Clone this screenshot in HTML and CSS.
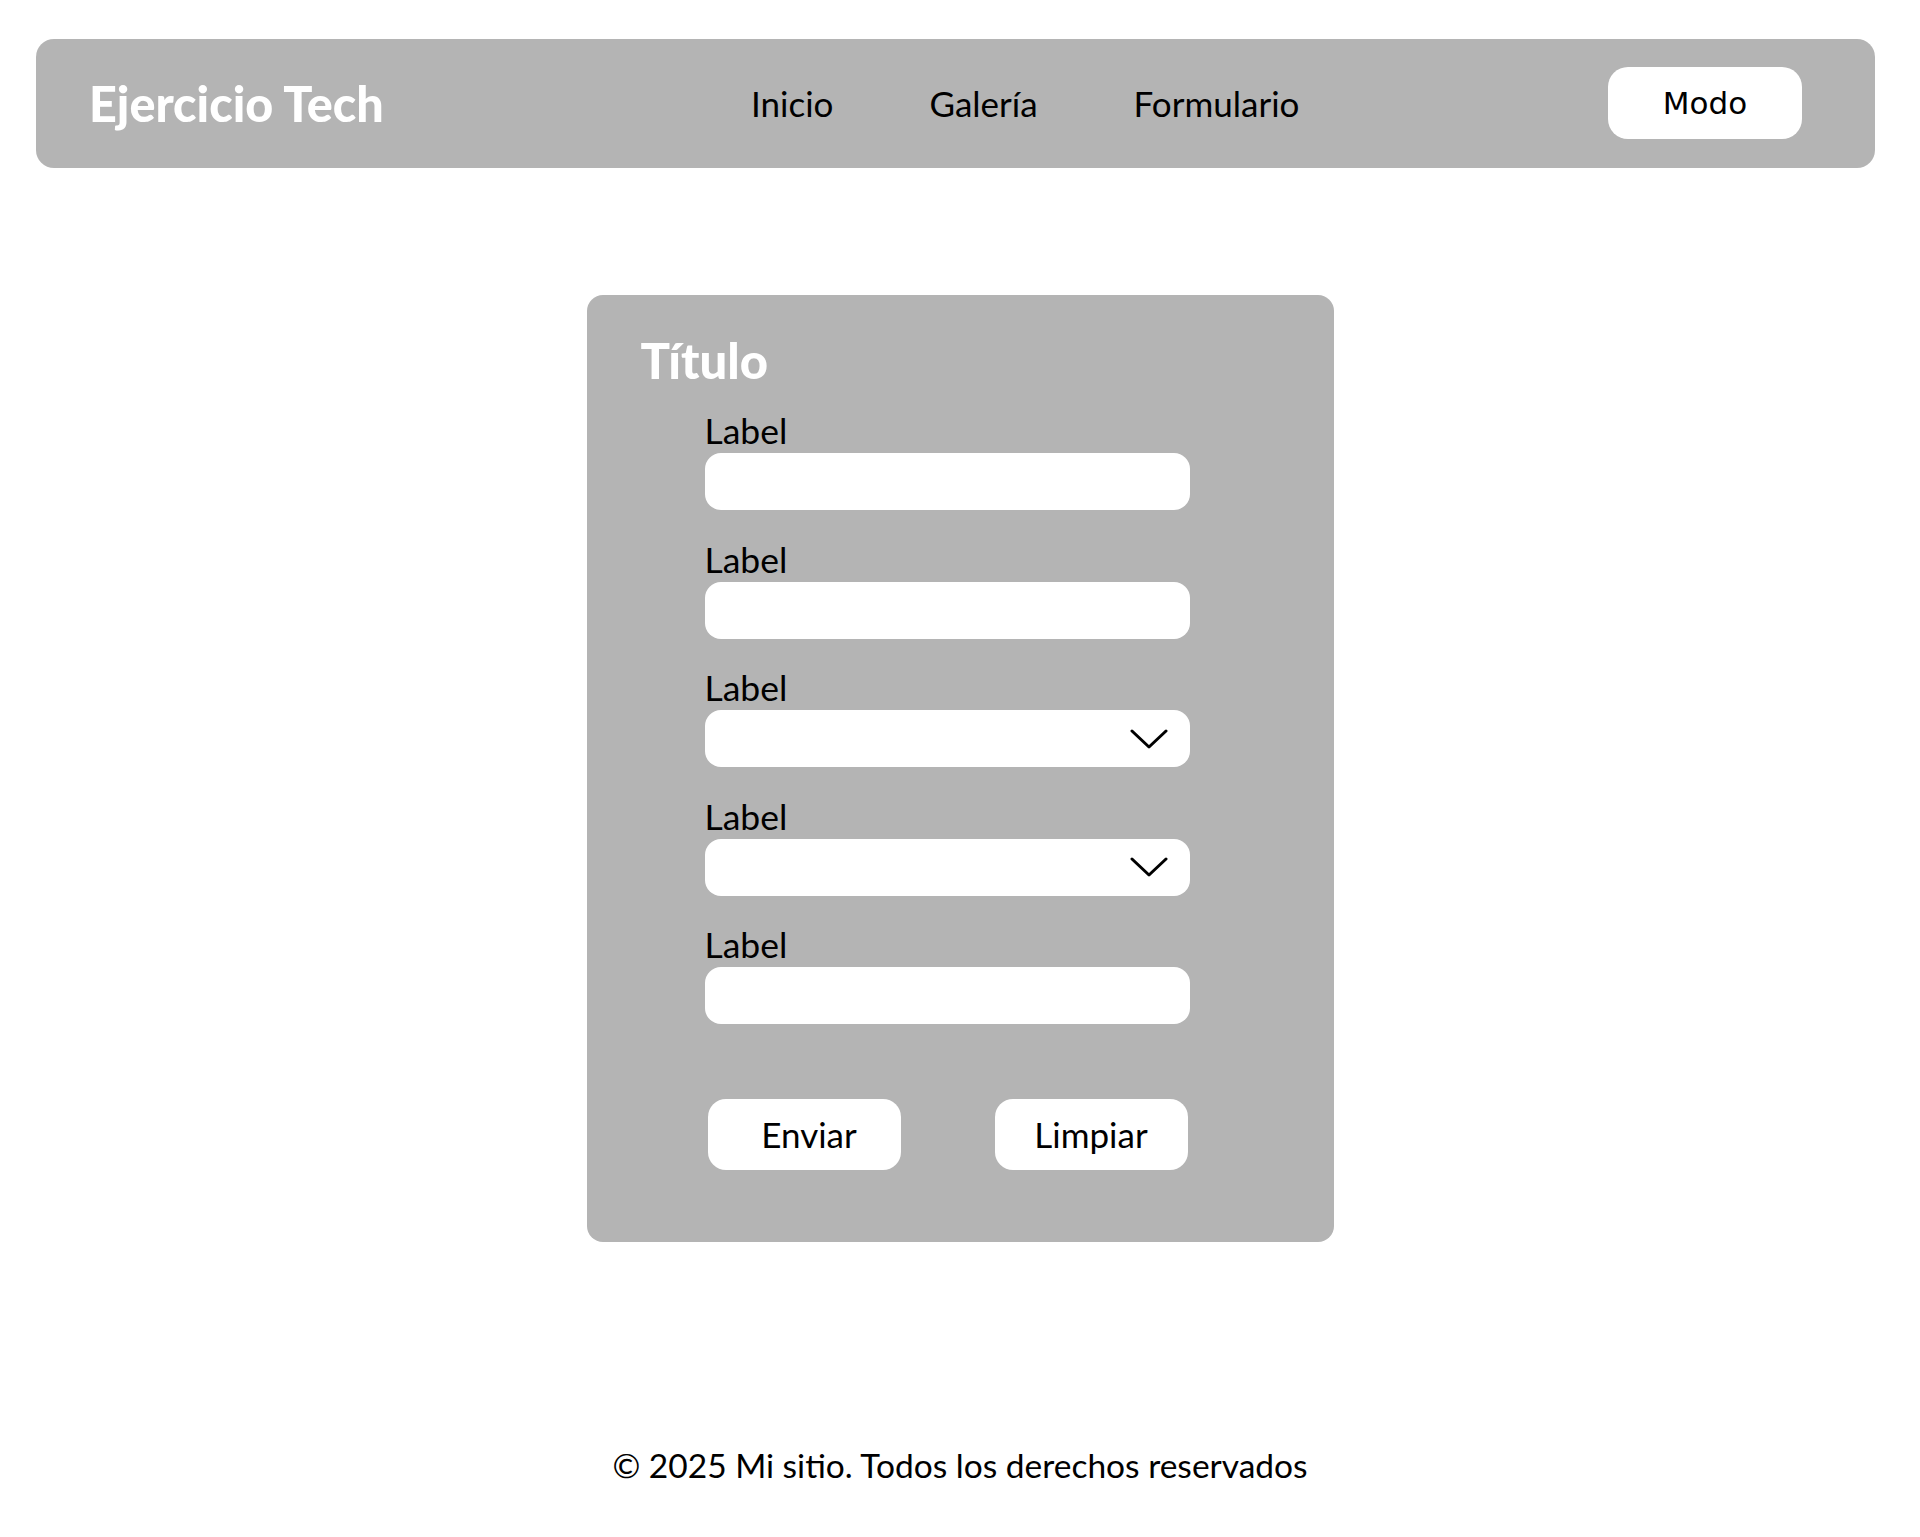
FILE: index.html
```html
<!DOCTYPE html>
<html lang="es">
<head>
<meta charset="utf-8">
<title>Ejercicio Tech</title>
<link rel="stylesheet" href="styles.css">
</head>
<body>
<header class="topbar">
  <div class="brand">Ejercicio Tech</div>
  <nav class="nav">
    <a href="#" class="nav-link">Inicio</a>
    <a href="#" class="nav-link">Galería</a>
    <a href="#" class="nav-link">Formulario</a>
  </nav>
  <button class="mode-btn" type="button">Modo</button>
</header>

<main class="main">
  <form class="card">
    <h1 class="card-title">Título</h1>
    <div class="fields">
      <div class="field">
        <label class="label">Label</label>
        <div class="input"></div>
      </div>
      <div class="field">
        <label class="label">Label</label>
        <div class="input"></div>
      </div>
      <div class="field">
        <label class="label">Label</label>
        <div class="input select">
          <svg class="chevron" viewBox="0 0 38 20" width="38" height="20"><polyline points="2,2 19,18 36,2" fill="none" stroke="#000" stroke-width="3" stroke-linecap="round" stroke-linejoin="round"/></svg>
        </div>
      </div>
      <div class="field">
        <label class="label">Label</label>
        <div class="input select">
          <svg class="chevron" viewBox="0 0 38 20" width="38" height="20"><polyline points="2,2 19,18 36,2" fill="none" stroke="#000" stroke-width="3" stroke-linecap="round" stroke-linejoin="round"/></svg>
        </div>
      </div>
      <div class="field">
        <label class="label">Label</label>
        <div class="input"></div>
      </div>
      <div class="actions">
        <button type="button" class="btn btn-send">Enviar</button>
        <button type="button" class="btn">Limpiar</button>
      </div>
    </div>
  </form>
</main>

<footer class="footer">© 2025 Mi sitio. Todos los derechos reservados</footer>
</body>
</html>
```

FILE: styles.css
```css
* { box-sizing: border-box; }

body {
  margin: 0;
  background: #ffffff;
  color: #000000;
  font-family: "Lato", "Open Sans", sans-serif;
  font-size: 34px;
}

.topbar {
  margin: 39px 45px 0 36px;
  height: 129px;
  background: #b4b4b4;
  border-radius: 18px;
  display: flex;
  align-items: center;
  padding: 0 73px 0 53px;
}

.brand {
  flex: 0 0 662px;
  color: #ffffff;
  font-weight: 900;
  font-size: 48.5px;
  line-height: 56px;
  margin-top: -1px;
}

.nav {
  display: flex;
  gap: 96px;
  margin-top: 0;
}

.nav-link {
  color: #000000;
  text-decoration: none;
  font-size: 35px;
  line-height: 41px;
}

.mode-btn {
  margin-left: auto;
  margin-top: -2px;
  width: 194px;
  height: 72px;
  border: none;
  border-radius: 20px;
  background: #ffffff;
  color: #000000;
  font-family: "DejaVu Sans", sans-serif;
  font-size: 31px;
  padding: 0;
}

.main {
  display: flex;
  justify-content: center;
  padding-top: 127px;
}

.card {
  width: 747px;
  background: #b4b4b4;
  border-radius: 16px;
  padding: 37px 0 72px 0;
  margin: 0;
}

.card-title {
  margin: 0 0 0 54px;
  color: #ffffff;
  font-weight: 900;
  font-size: 49px;
  line-height: 56px;
}

.fields {
  width: 485px;
  margin: 22px 0 0 118px;
  display: flex;
  flex-direction: column;
  gap: 28.5px;
}

.field {
  display: flex;
  flex-direction: column;
  gap: 2px;
}

.label {
  font-size: 35.5px;
  line-height: 41px;
}

.input {
  height: 57px;
  background: #ffffff;
  border-radius: 16px;
}

.select {
  display: flex;
  align-items: center;
  justify-content: flex-end;
  padding-right: 22px;
}

.chevron { display: block; }

.actions {
  display: flex;
  justify-content: space-between;
  padding: 0 2px 0 3px;
  margin-top: 46px;
}

.btn {
  width: 193px;
  height: 71px;
  border: none;
  border-radius: 18px;
  background: #ffffff;
  color: #000000;
  font-family: "Lato", "Open Sans", sans-serif;
  font-size: 35px;
  padding: 0;
}

.btn-send { padding-left: 10px; }

.footer {
  text-align: center;
  margin-top: 203px;
  font-size: 33.5px;
  line-height: 41px;
}
```
